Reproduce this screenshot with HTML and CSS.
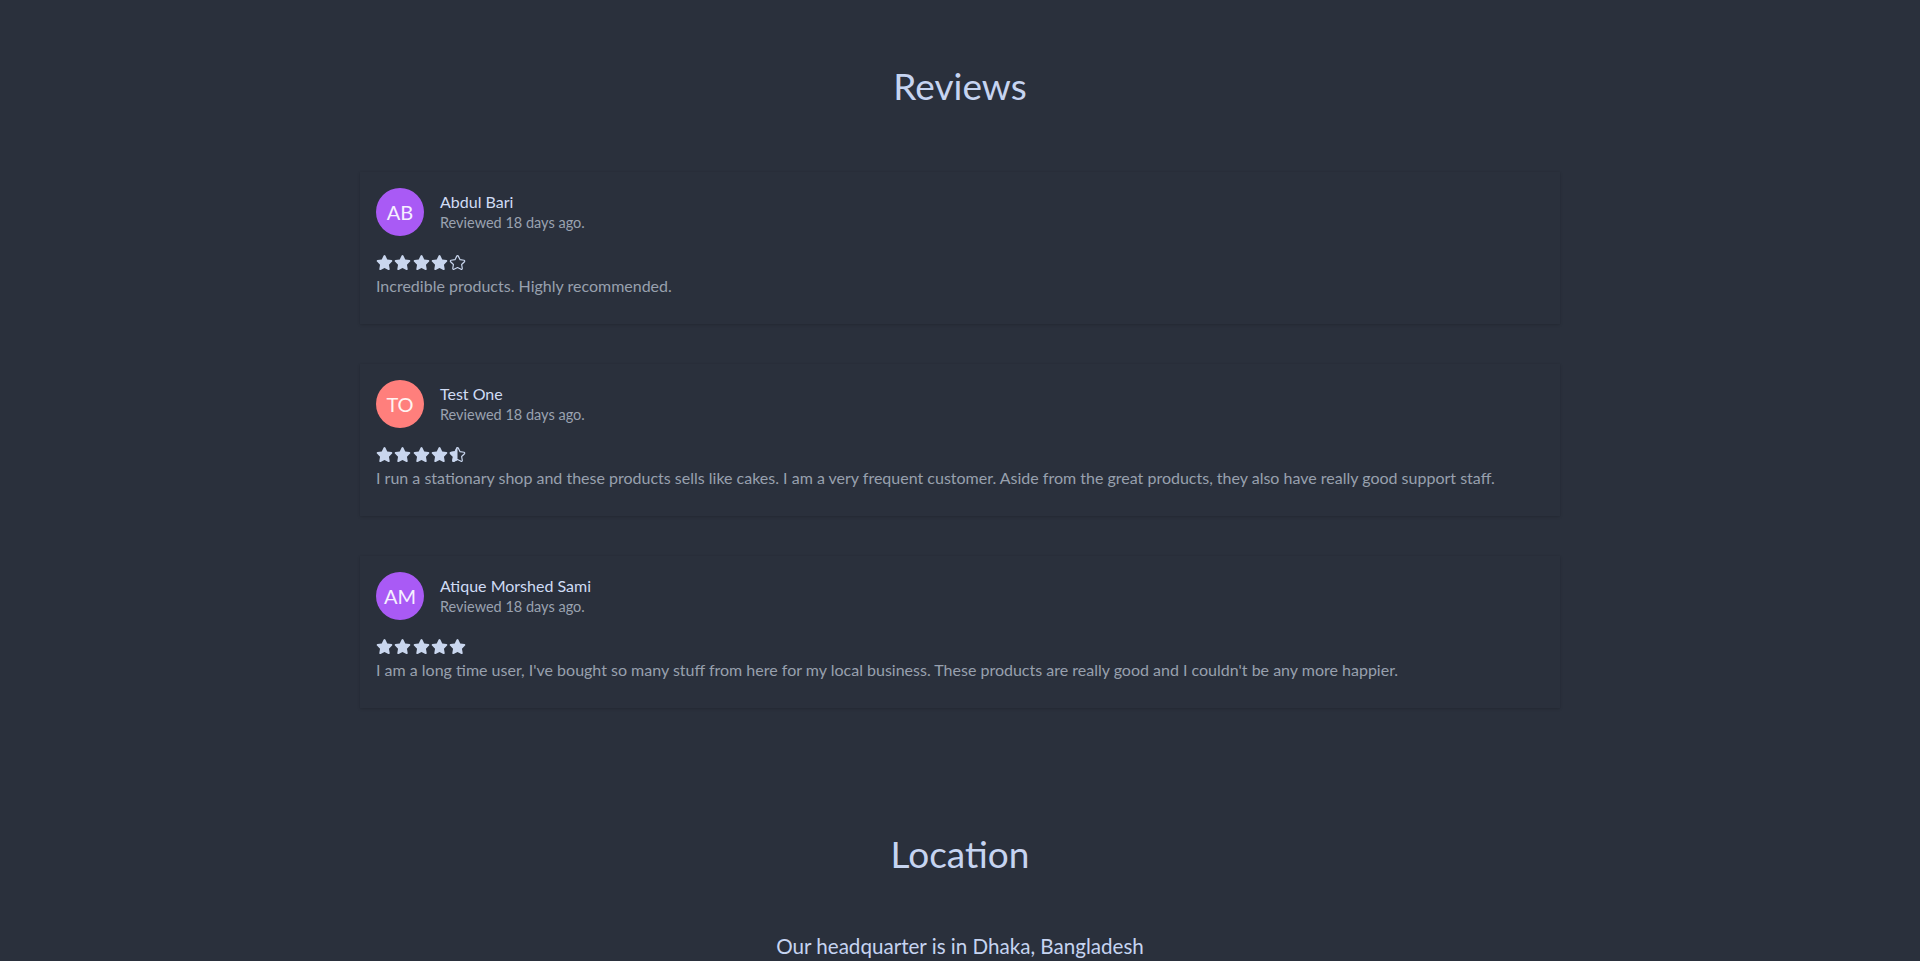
FILE: index.html
```html
<!DOCTYPE html>
<html lang="en">
<head>
<meta charset="utf-8">
<title>Reviews</title>
<link rel="stylesheet" href="styles.css">
</head>
<body>
<svg class="defs" width="0" height="0" aria-hidden="true">
  <defs>
    <path id="star" d="M259.3 17.8L194 150.2 47.9 171.5c-26.2 3.8-36.7 36.1-17.7 54.6l105.7 103-25 145.5c-4.5 26.3 23.2 46 46.4 33.7L288 439.6l130.7 68.7c23.2 12.2 50.9-7.4 46.4-33.7l-25-145.5 105.7-103c19-18.5 8.5-50.8-17.7-54.6L382 150.2 316.7 17.8c-11.7-23.6-45.6-23.9-57.4 0z"/>
    <clipPath id="left-half"><rect x="0" y="0" width="288" height="512"/></clipPath>
  </defs>
</svg>
<section class="reviews">
  <h2 class="section-title">Reviews</h2>
  <div class="review-list">
    <article class="review-card">
      <div class="review-head">
        <div class="avatar avatar-purple">AB</div>
        <div class="reviewer">
          <div class="reviewer-name">Abdul Bari</div>
          <div class="reviewer-date">Reviewed 18 days ago.</div>
        </div>
      </div>
      <div class="stars">
        <svg class="star" viewBox="0 0 576 512"><use class="full" href="#star"/></svg>
        <svg class="star" viewBox="0 0 576 512"><use class="full" href="#star"/></svg>
        <svg class="star" viewBox="0 0 576 512"><use class="full" href="#star"/></svg>
        <svg class="star" viewBox="0 0 576 512"><use class="full" href="#star"/></svg>
        <svg class="star" viewBox="0 0 576 512"><use class="empty" href="#star"/></svg>
      </div>
      <p class="review-text">Incredible products. Highly recommended.</p>
    </article>

    <article class="review-card">
      <div class="review-head">
        <div class="avatar avatar-coral">TO</div>
        <div class="reviewer">
          <div class="reviewer-name">Test One</div>
          <div class="reviewer-date">Reviewed 18 days ago.</div>
        </div>
      </div>
      <div class="stars">
        <svg class="star" viewBox="0 0 576 512"><use class="full" href="#star"/></svg>
        <svg class="star" viewBox="0 0 576 512"><use class="full" href="#star"/></svg>
        <svg class="star" viewBox="0 0 576 512"><use class="full" href="#star"/></svg>
        <svg class="star" viewBox="0 0 576 512"><use class="full" href="#star"/></svg>
        <svg class="star" viewBox="0 0 576 512"><use class="empty" href="#star"/><use class="full" href="#star" clip-path="url(#left-half)"/></svg>
      </div>
      <p class="review-text">I run a stationary shop and these products sells like cakes. I am a very frequent customer. Aside from the great products, they also have really good support staff.</p>
    </article>

    <article class="review-card">
      <div class="review-head">
        <div class="avatar avatar-purple">AM</div>
        <div class="reviewer">
          <div class="reviewer-name">Atique Morshed Sami</div>
          <div class="reviewer-date">Reviewed 18 days ago.</div>
        </div>
      </div>
      <div class="stars">
        <svg class="star" viewBox="0 0 576 512"><use class="full" href="#star"/></svg>
        <svg class="star" viewBox="0 0 576 512"><use class="full" href="#star"/></svg>
        <svg class="star" viewBox="0 0 576 512"><use class="full" href="#star"/></svg>
        <svg class="star" viewBox="0 0 576 512"><use class="full" href="#star"/></svg>
        <svg class="star" viewBox="0 0 576 512"><use class="full" href="#star"/></svg>
      </div>
      <p class="review-text">I am a long time user, I've bought so many stuff from here for my local business. These products are really good and I couldn't be any more happier.</p>
    </article>
  </div>
</section>

<section class="location">
  <h2 class="section-title">Location</h2>
  <p class="location-text">Our headquarter is in Dhaka, Bangladesh</p>
</section>
</body>
</html>
```

FILE: styles.css
```css
* { box-sizing: border-box; }

html, body {
  margin: 0;
  padding: 0;
  background: #2a303c;
}

body {
  font-family: "Lato", "Noto Sans", sans-serif;
  color: #c6d2ec;
  height: 961px;
  overflow: hidden;
}

.defs {
  position: absolute;
  width: 0;
  height: 0;
  overflow: hidden;
}

.reviews {
  padding-top: 64px;
}

.section-title {
  margin: 0;
  text-align: center;
  font-weight: 400;
  font-size: 37px;
  line-height: 44px;
  color: #c6d4f1;
}

.review-list {
  width: 1200px;
  margin: 64px auto 0;
  display: flex;
  flex-direction: column;
  gap: 40px;
}

.review-card {
  background: #2a303c;
  box-shadow: 0 1px 3px rgba(0, 0, 0, 0.14), 0 0 1px rgba(0, 0, 0, 0.1);
  padding: 16px 16px 24px;
  height: 152px;
}

.review-head {
  display: flex;
  align-items: center;
  gap: 16px;
}

.avatar {
  width: 48px;
  height: 48px;
  border-radius: 50%;
  display: flex;
  align-items: center;
  justify-content: center;
  font-size: 20px;
  color: #f5f0ff;
  flex: none;
}

.avatar-purple { background: #a95af5; }
.avatar-coral { background: #ff7f7c; color: #fff3f1; }

.reviewer {
  display: flex;
  flex-direction: column;
}

.reviewer-name {
  font-size: 16px;
  line-height: 22px;
  color: #d0dcf5;
}

.reviewer-date {
  font-size: 14.5px;
  line-height: 20px;
  color: #9aa2b0;
}

.stars {
  margin-top: 14px;
  height: 24px;
  display: flex;
  align-items: center;
  gap: 1.3px;
}

.star {
  width: 17px;
  height: 15px;
  overflow: visible;
}

.star .full { fill: #c9d6ee; }
.star .empty {
  fill: none;
  stroke: #c9d6ee;
  stroke-width: 44;
  stroke-linejoin: round;
  transform: translate(24px, 22px) scale(0.92);
}

.review-text {
  margin: 0;
  font-size: 16px;
  line-height: 24px;
  color: #98a0ae;
}

.location {
  padding-top: 124px;
  text-align: center;
}

.location-text {
  margin: 56px 0 0;
  font-size: 20.6px;
  line-height: 28px;
  color: #c6d4f1;
}
```
